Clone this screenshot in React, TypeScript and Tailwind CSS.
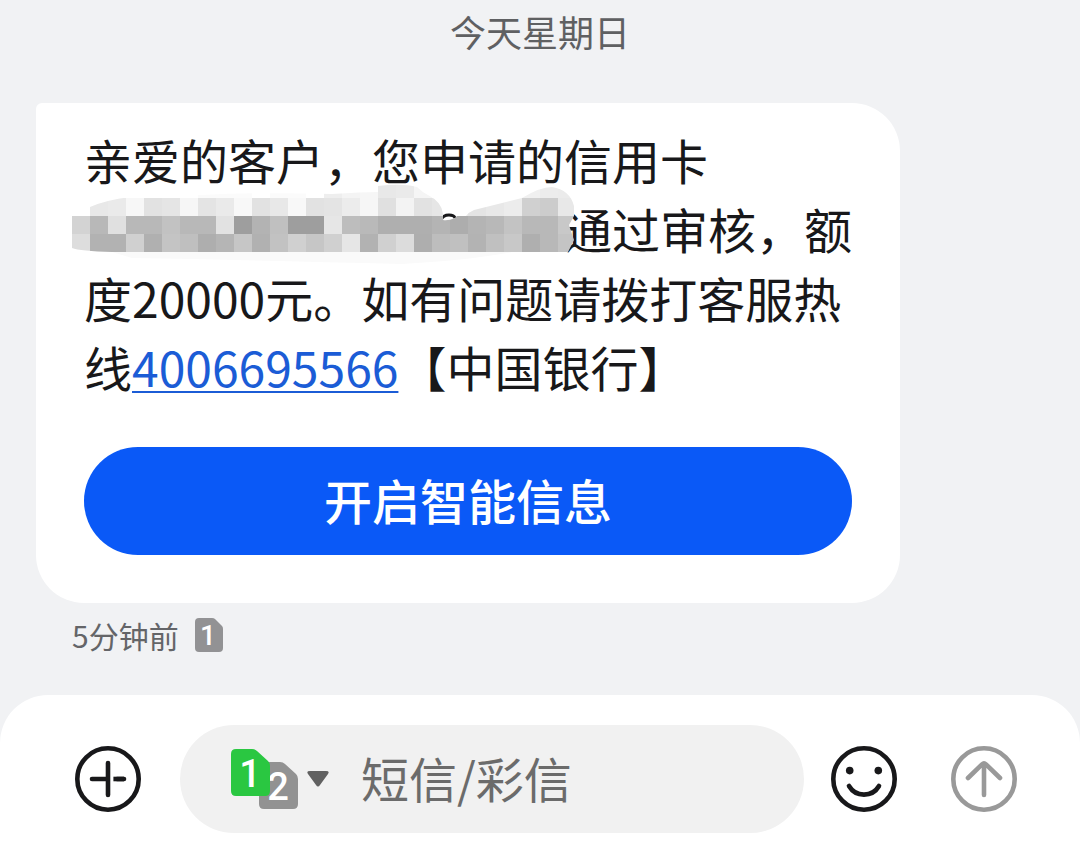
import { useState } from 'react'

const CELL = 18

// grey level of every mosaic cell, row by row, '' = nothing
const mosaic = [
  ['', '', '', '', '', '', '', 'fb', 'fb', 'fb', '', 'fb', 'fb', '', 'ee', 'f4', 'f6', 'e8', 'ea', 'f5', '', '', '', '', '', 'f0', 'ec', 'eb'],
  ['', 'e8', 'ea', 'f7', 'e2', 'e5', 'f6', 'e4', 'ea', 'f8', 'e2', 'e8', 'f8', 'e2', 'e4', 'ec', 'f6', 'e0', 'f3', 'e2', 'e6', 'e8', 'e4', 'e8', 'ec', 'd0', 'cc', 'e8'],
  ['d3', 'b8', 'e0', 'b8', 'b8', 'c2', 'b8', 'b8', 'e2', '9e', 'b3', 'c0', '9e', '9e', 'e6', 'bd', 'b9', 'af', 'af', 'af', 'b4', 'ad', 'b4', 'b8', 'c3', 'b8', 'b8', 'c8'],
  ['dd', 'b2', 'b2', 'd0', 'b0', 'c4', 'bf', 'ae', 'b5', 'c6', 'b1', 'c2', 'd0', 'c6', 'd0', 'e6', 'b2', 'd0', 'dc', 'ae', 'bd', 'c0', 'b3', 'c0', 'c8', 'af', 'b8', 'c4'],
]

function Mosaic() {
  return (
    <svg width="502" height="86" viewBox="0 0 502 86" aria-hidden="true" className="absolute -top-8 -left-3">
      <defs>
        <clipPath id="smear">
          <path d="M0 36 H18 V27 Q34 20 58 17 L130 15 Q190 12 260 14 Q290 12 306 12 V6 Q330 3 345 7 Q350 12 356 15 Q370 22 371 34 V40 Q376 41 383 38 L385 36 H394 Q397 32 402 30 L450 18 Q468 7 480 7 Q498 10 502 26 V36 L497 45 L502 60 L496 72 H40 Q8 71 0 68 Z" />
        </clipPath>
      </defs>
      <path d="M40 72 H440 Q400 80 330 84 Q180 80 60 78 Z" fill="#fafafa" />
      <path d="M369 40 Q371 35 377 35 Q382 35 383 38" fill="none" stroke="#18181a" strokeWidth="3" />
      <g clipPath="url(#smear)" shapeRendering="crispEdges">
        {mosaic.map((row, y) =>
          row.map((v, x) =>
            v ? (
              <rect key={x + '-' + y} x={x * CELL} y={y * CELL} width={CELL} height={CELL} fill={'#' + v + v + v} />
            ) : null
          )
        )}
      </g>
    </svg>
  )
}

function SimShape({ n, color }: { n: number; color: string }) {
  return (
    <svg width="39" height="47" viewBox="0 0 39 47" aria-hidden="true" className="overflow-visible">
      <path d="M5 0 H21 Q24 0 26 2 L37 12 Q39 14 39 17 V42 Q39 47 34 47 H5 Q0 47 0 42 V5 Q0 0 5 0 Z" fill={color} />
      <text x="19" y="38" textAnchor="middle" fontSize="38" fontWeight="500" fontFamily="Roboto, sans-serif" fill="#fff">
        {n}
      </text>
    </svg>
  )
}

export default function App() {
  const [text, setText] = useState('')

  return (
    <div className="flex min-h-screen flex-col bg-[#f1f2f4] font-['Noto_Sans_CJK_SC',sans-serif] text-[#18181a]">
      <header className="pt-[6px] text-center text-4xl leading-[50px] text-[#5f6062]">今天星期日</header>

      <main className="flex flex-1 flex-col items-start px-9 pt-[47px] pb-6">
        <div className="w-full max-w-[864px] rounded-[48px] rounded-tl-md bg-white px-12 pt-[22px] pb-12">
          <p className="text-5xl leading-[69px]">
            亲爱的客户，您申请的信用卡
            <span className="relative inline-block h-12 w-[480px] align-middle">
              <Mosaic />
            </span>
            通过审核，额度20000元。如有问题请拨打客服热线
            <a href="tel:4006695566" className="text-[#1b5cd6] underline decoration-2 underline-offset-4">
              4006695566
            </a>
            【中国银行】
          </p>
          <button className="mt-[46px] h-[108px] w-full rounded-full bg-[#0a59f7] pb-1 text-5xl font-medium text-white">
            开启智能信息
          </button>
        </div>

        <div className="mt-[10px] flex items-center gap-4 pl-9 text-3xl leading-[44px] text-[#646568]">
          <span>5分钟前</span>
          <svg width="28" height="34" viewBox="0 0 28 34" aria-hidden="true" className="overflow-visible">
            <path d="M4 0 H17 Q19 0 20 1 L27 8 Q28 9 28 11 V30 Q28 34 24 34 H4 Q0 34 0 30 V4 Q0 0 4 0 Z" fill="#929294" />
            <text x="13" y="27" textAnchor="middle" fontSize="28" fontWeight="500" fontFamily="Roboto, sans-serif" fill="#fff">
              1
            </text>
          </svg>
        </div>
      </main>

      <footer className="flex items-center rounded-t-[48px] bg-white pt-[30px] pr-[63px] pb-[29px] pl-[75px]">
        <button aria-label="添加" className="shrink-0">
          <svg width="66" height="66" viewBox="0 0 66 66" fill="none" stroke="#18181a" strokeLinecap="round">
            <circle cx="33" cy="33" r="30.7" strokeWidth="4.6" />
            <path d="M33 17 V49 M17 33 H33" strokeWidth="4.6" />
            <path d="M38.4 33 H49" strokeWidth="4.6" strokeLinecap="butt" />
            <path d="M42 33 H49" strokeWidth="4.6" />
          </svg>
        </button>

        <div className="ml-[39px] flex h-[108px] min-w-0 flex-1 items-center rounded-full bg-[#f1f1f1] pr-12 pl-[51px]">
          <button aria-label="选择SIM卡" className="flex shrink-0 items-center gap-[9px]">
            <span className="relative block h-[60px] w-[67px]">
              <span className="absolute right-0 bottom-0">
                <SimShape n={2} color="#929292" />
              </span>
              <span className="absolute top-0 left-0">
                <SimShape n={1} color="#2ac741" />
              </span>
            </span>
            <svg width="22" height="16" viewBox="0 0 22 16" aria-hidden="true">
              <path d="M3 0 H19 Q23 0 21 3 L13 14 Q11 17 9 14 L1 3 Q-1 0 3 0 Z" fill="#616161" />
            </svg>
          </button>
          <input
            aria-label="短信/彩信"
            placeholder="短信/彩信"
            value={text}
            onChange={(e) => setText(e.target.value)}
            className="ml-8 h-[72px] min-w-0 flex-1 bg-transparent pb-1 text-5xl outline-none placeholder:text-[#6b6b6b]"
          />
        </div>

        <button aria-label="表情" className="ml-[27px] shrink-0">
          <svg width="66" height="66" viewBox="0 0 66 66" fill="none" stroke="#18181a" strokeLinecap="round">
            <circle cx="33" cy="33" r="30.7" strokeWidth="4.6" />
            <circle cx="18.7" cy="24.6" r="3.8" fill="#18181a" stroke="none" />
            <circle cx="47.3" cy="24.6" r="3.8" fill="#18181a" stroke="none" />
            <path d="M18 40 A17.4 17.4 0 0 0 48 40" strokeWidth="4.6" />
          </svg>
        </button>
        <button aria-label="发送" className="ml-[54px] shrink-0">
          <svg width="66" height="66" viewBox="0 0 66 66" fill="none" stroke="#999999" strokeLinecap="round" strokeLinejoin="round">
            <circle cx="33" cy="33" r="30.7" strokeWidth="4.6" />
            <path d="M33 18 V49 M17 32 L31 18.4 Q33 16.6 35 18.4 L49 32" strokeWidth="4.6" />
          </svg>
        </button>
      </footer>
    </div>
  )
}
